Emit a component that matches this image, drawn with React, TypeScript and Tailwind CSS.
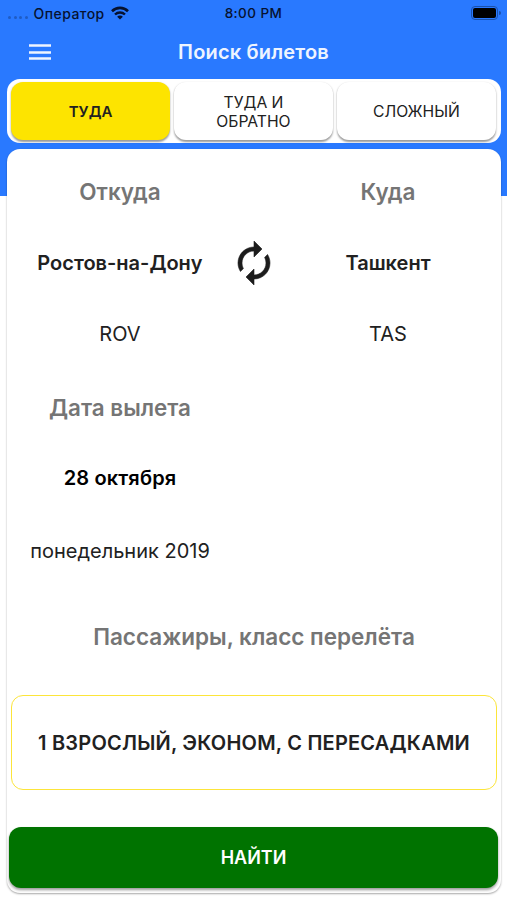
import React, { useState } from 'react';

type TripType = 'oneWay' | 'roundTrip' | 'complex';

const TRIP_TABS: { id: TripType; label: string }[] = [
  { id: 'oneWay', label: 'ТУДА' },
  { id: 'roundTrip', label: 'ТУДА И ОБРАТНО' },
  { id: 'complex', label: 'СЛОЖНЫЙ' },
];

const MenuIcon: React.FC = () => (
  <svg className="h-[30px] w-[30px] text-[#eef4ff]" viewBox="0 0 30 30" fill="none">
    <path d="M4 8.5H26M4 15.5H26M4 21.5H26" stroke="currentColor" strokeWidth="2.6" />
  </svg>
);

const SwapIcon: React.FC = () => (
  <svg className="h-12 w-12 text-[#1c1c1c]" viewBox="0 0 24 24" fill="currentColor">
    <path
      d="M12 6v3l4-4-4-4v3c-4.42 0-8 3.58-8 8 0 1.57.46 3.03 1.24 4.26L6.7 14.8c-.45-.83-.7-1.79-.7-2.8 0-3.31 2.69-6 6-6zm6.76 1.74L17.3 9.2c.44.84.7 1.79.7 2.8 0 3.31-2.69 6-6 6v-3l-4 4 4 4v-3c4.42 0 8-3.58 8-8 0-1.57-.46-3.03-1.24-4.26z"
      stroke="currentColor"
      strokeWidth="0.3"
      strokeLinejoin="round"
    />
  </svg>
);

const StatusBar: React.FC = () => (
  <div className="grid h-[26px] grid-cols-[1fr_auto_1fr] items-center px-2 text-[14px] font-medium tracking-[0.45px] text-[#061230]">
    <div className="flex items-center">
      <div className="mt-[8px] flex gap-[2.5px]">
        {[0, 1, 2, 3].map((dot) => (
          <span key={dot} className="h-[3px] w-[3px] rounded-full bg-[#1f5cc4]"></span>
        ))}
      </div>
      <span className="ml-[6px] whitespace-nowrap">Оператор</span>
      <svg className="ml-[6px] h-[14px] w-[18px]" viewBox="0 0 18 14" fill="none">
        <path d="M1 5.2C5.5 0.8 12.5 0.8 17 5.2" stroke="currentColor" strokeWidth="2.6" />
        <path d="M4 8.5C6.8 5.8 11.2 5.8 14 8.5" stroke="currentColor" strokeWidth="2.4" />
        <path d="M9 13.6L6.1 10.7C7.7 9.2 10.3 9.2 11.9 10.7L9 13.6Z" fill="currentColor" />
      </svg>
    </div>
    <span className="text-center text-[13.5px]">8:00 PM</span>
    <div className="flex items-center justify-end">
      <div className="h-[14px] w-[27px] rounded-[4px] border border-[#1a51ab] p-px">
        <div className="h-full w-full rounded-[2px] bg-black"></div>
      </div>
      <span className="ml-px -mr-[2px] h-1 w-[2px] rounded-r-full bg-[#1a51ab]"></span>
    </div>
  </div>
);

export default function App() {
  const [tripType, setTripType] = useState<TripType>('oneWay');
  const [from, setFrom] = useState({ city: 'Ростов-на-Дону', code: 'ROV' });
  const [to, setTo] = useState({ city: 'Ташкент', code: 'TAS' });

  const swapCities = () => {
    setFrom(to);
    setTo(from);
  };

  return (
    <div className="h-[900px] w-[507px] overflow-hidden bg-[linear-gradient(#2979ff_196px,#ffffff_196px)] font-['Inter','Liberation_Sans',sans-serif] text-[#212121]">
      <StatusBar />

      {/* Navigation bar */}
      <header className="grid h-[53px] grid-cols-[1fr_auto_1fr] items-center px-[25px] pb-px">
        <button type="button" aria-label="Меню" className="w-fit">
          <MenuIcon />
        </button>
        <h1 className="text-[20px] font-semibold tracking-[0.18px] text-[#eef4ff]">Поиск билетов</h1>
      </header>

      {/* Trip type */}
      <div className="ml-[7px] flex h-[64px] w-[494px] gap-1 rounded-[13px] bg-white pt-[3px] pr-[5px] pb-[3px] pl-[4px]">
        {TRIP_TABS.map((tab) => (
          <button
            key={tab.id}
            type="button"
            onClick={() => setTripType(tab.id)}
            className={`flex-1 rounded-[12px] px-6 pt-px leading-[19px] shadow-[0_1.5px_2px_rgba(0,0,0,0.4)] ${
              tripType === tab.id ? 'bg-[#fde400] text-[15px] font-semibold' : 'bg-white text-[15.7px] font-normal'
            }`}
          >
            {tab.label}
          </button>
        ))}
      </div>

      {/* Search form */}
      <main className="mt-[6px] ml-[7px] h-[744px] w-[494px] rounded-[13px] bg-white shadow-[0_1px_2px_rgba(0,0,0,0.35)]">
        <div className="grid grid-cols-[226px_42px_226px] grid-rows-[84px_60px_82px] place-items-center text-[20px]">
          <span className="pt-px text-[22.5px] font-semibold text-[#757575]">Откуда</span>
          <span></span>
          <span className="pt-px text-[22.5px] font-semibold text-[#757575]">Куда</span>

          <span className="font-semibold">{from.city}</span>
          <button type="button" aria-label="Поменять местами" onClick={swapCities}>
            <SwapIcon />
          </button>
          <span className="font-semibold">{to.city}</span>

          <span>{from.code}</span>
          <span></span>
          <span>{to.code}</span>
        </div>

        <div className="grid w-[226px] grid-rows-[66px_74px_72px] place-items-center text-[20px]">
          <span className="text-[22.4px] font-semibold text-[#757575]">Дата вылета</span>
          <span className="font-semibold tracking-[0.15px] text-black">28 октября</span>
          <span>понедельник 2019</span>
        </div>

        <div className="flex h-[100px] items-center justify-center text-[22.5px] font-semibold text-[#757575]">
          Пассажиры, класс перелёта
        </div>

        <button
          type="button"
          className="mx-1 mt-2 flex h-[95px] w-[486px] items-center justify-center rounded-[12px] border-[1.5px] border-[#fce53a] text-[20px] font-semibold tracking-[0.22px] whitespace-nowrap"
        >
          1 ВЗРОСЛЫЙ, ЭКОНОМ, С ПЕРЕСАДКАМИ
        </button>

        <button
          type="button"
          className="mt-[37px] ml-[2px] flex h-[61px] w-[489px] items-center justify-center rounded-[12px] bg-[#007300] text-[18px] font-semibold text-white shadow-[0_2px_3px_rgba(0,0,0,0.4)]"
        >
          НАЙТИ
        </button>
      </main>
    </div>
  );
}
